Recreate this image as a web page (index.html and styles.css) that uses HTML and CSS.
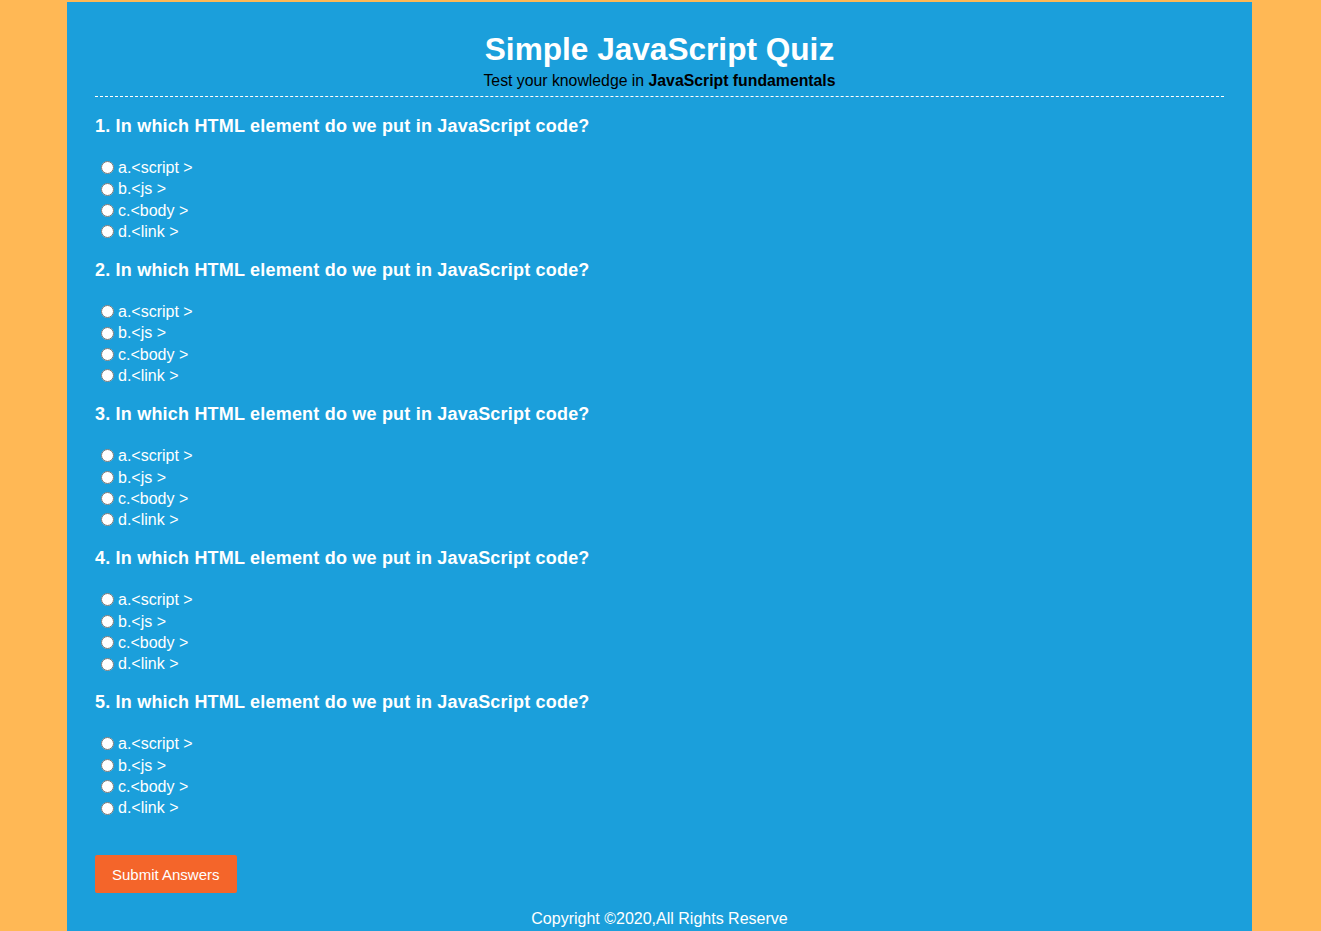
FILE: index.html
```html
<!DOCTYPE html>
<html>
<head>
<meta charset="utf-8">
<link rel="stylesheet" href="styles.css">
</head>
<body>
<div class="quiz">
  <header class="head">
    <h1 class="title">Simple JavaScript Quiz</h1>
    <p class="sub">Test your knowledge in <strong>JavaScript fundamentals</strong></p>
  </header>
  <form class="form">
    <div class="q">
      <h3 class="qt">1. In which HTML element do we put in JavaScript code?</h3>
      <label class="opt"><input type="radio" name="q1">a.&lt;script &gt;</label>
      <label class="opt"><input type="radio" name="q1">b.&lt;js &gt;</label>
      <label class="opt"><input type="radio" name="q1">c.&lt;body &gt;</label>
      <label class="opt"><input type="radio" name="q1">d.&lt;link &gt;</label>
    </div>
    <div class="q">
      <h3 class="qt">2. In which HTML element do we put in JavaScript code?</h3>
      <label class="opt"><input type="radio" name="q2">a.&lt;script &gt;</label>
      <label class="opt"><input type="radio" name="q2">b.&lt;js &gt;</label>
      <label class="opt"><input type="radio" name="q2">c.&lt;body &gt;</label>
      <label class="opt"><input type="radio" name="q2">d.&lt;link &gt;</label>
    </div>
    <div class="q">
      <h3 class="qt">3. In which HTML element do we put in JavaScript code?</h3>
      <label class="opt"><input type="radio" name="q3">a.&lt;script &gt;</label>
      <label class="opt"><input type="radio" name="q3">b.&lt;js &gt;</label>
      <label class="opt"><input type="radio" name="q3">c.&lt;body &gt;</label>
      <label class="opt"><input type="radio" name="q3">d.&lt;link &gt;</label>
    </div>
    <div class="q">
      <h3 class="qt">4. In which HTML element do we put in JavaScript code?</h3>
      <label class="opt"><input type="radio" name="q4">a.&lt;script &gt;</label>
      <label class="opt"><input type="radio" name="q4">b.&lt;js &gt;</label>
      <label class="opt"><input type="radio" name="q4">c.&lt;body &gt;</label>
      <label class="opt"><input type="radio" name="q4">d.&lt;link &gt;</label>
    </div>
    <div class="q">
      <h3 class="qt">5. In which HTML element do we put in JavaScript code?</h3>
      <label class="opt"><input type="radio" name="q5">a.&lt;script &gt;</label>
      <label class="opt"><input type="radio" name="q5">b.&lt;js &gt;</label>
      <label class="opt"><input type="radio" name="q5">c.&lt;body &gt;</label>
      <label class="opt"><input type="radio" name="q5">d.&lt;link &gt;</label>
    </div>
    <button type="button" class="submit">Submit Answers</button>
  </form>
  <footer class="foot">Copyright &copy;2020,All Rights Reserve</footer>
</div>
</body>
</html>
```

FILE: styles.css
```css
html, body {
  margin: 0;
  padding: 0;
}
body {
  background: #ffb855;
  font-family: "Liberation Sans", Arial, sans-serif;
  color: #fff;
  overflow: hidden;
}
.quiz {
  width: 1129px;
  margin: 2px 0 0 67px;
  padding: 0 28px;
  background: #1b9fdb;
  min-height: 929px;
  box-sizing: content-box;
}
.head {
  padding-top: 29px;
  padding-bottom: 4px;
  border-bottom: 1px dashed #fff;
  text-align: center;
}
.title {
  margin: 0;
  font-size: 31.6px;
  line-height: 36px;
  font-weight: bold;
}
.sub {
  margin: 3px 0 0;
  font-size: 15.8px;
  line-height: 22px;
  color: #000;
}
.form {
  display: flex;
  flex-direction: column;
  align-items: flex-start;
  padding-top: 18px;
}
.q {
  display: flex;
  flex-direction: column;
  padding-bottom: 16.5px;
}
.qt {
  margin: 0 0 20px;
  font-size: 18px;
  line-height: 22px;
  font-weight: bold;
  letter-spacing: 0.2px;
}
.opt {
  display: flex;
  align-items: center;
  font-size: 16px;
  line-height: 21.4px;
  height: 21.4px;
}
.opt input {
  width: 13px;
  height: 13px;
  margin: 0 4px 0 6px;
}
.submit {
  margin-top: 20px;
  background: #f4652a;
  color: #fff;
  border: none;
  border-radius: 2px;
  font-family: "Liberation Sans", Arial, sans-serif;
  font-size: 15px;
  height: 38px;
  padding: 0 17px;
}
.foot {
  text-align: center;
  font-size: 16px;
  line-height: 20px;
  padding-top: 16px;
}
```
